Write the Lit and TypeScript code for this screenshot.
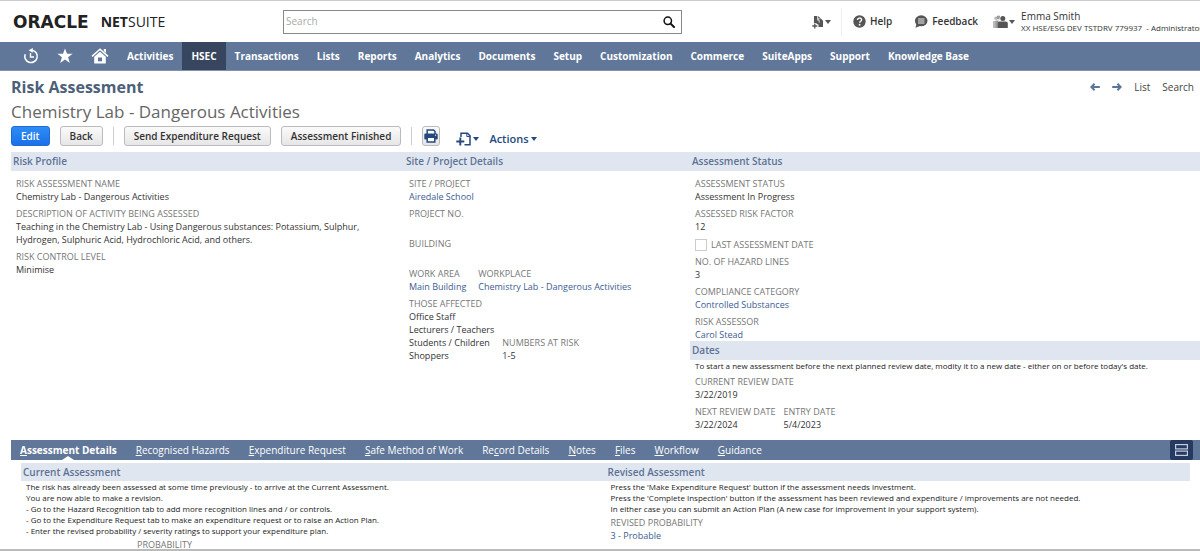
import { LitElement, html, css, svg, nothing, TemplateResult } from "lit";
import { customElement, state } from "lit/decorators.js";
import { classMap } from "lit/directives/class-map.js";

const NAV = [
  "Activities", "HSEC", "Transactions", "Lists", "Reports", "Analytics", "Documents", "Setup",
  "Customization", "Commerce", "SuiteApps", "Support", "Knowledge Base",
];

/* Text before the access key, the access key, text after it. */
const TABS: [string, string, string][] = [
  ["", "A", "ssessment Details"],
  ["", "R", "ecognised Hazards"],
  ["", "E", "xpenditure Request"],
  ["", "S", "afe Method of Work"],
  ["Re", "c", "ord Details"],
  ["", "N", "otes"],
  ["", "F", "iles"],
  ["", "W", "orkflow"],
  ["", "G", "uidance"],
];

const caret = html`<svg class="caret" viewBox="0 0 6 4" width="6" height="4" aria-hidden="true"><path d="M0 0h6L3 4z" fill="currentColor" /></svg>`;

const icon = (w: number, h: number, body: TemplateResult | ReturnType<typeof svg>) =>
  html`<svg class="icon" viewBox="0 0 ${w} ${h}" width=${w} height=${h} aria-hidden="true">${body}</svg>`;

const icons = {
  search: icon(12, 12, svg`<circle cx="4.8" cy="4.8" r="3.7" fill="none" stroke="#111" stroke-width="1.5"/><path d="M7.6 7.6l3.4 3.4" stroke="#111" stroke-width="2" stroke-linecap="round"/>`),
  create: icon(12, 14, svg`<path d="M2 1h3.500v4.500H7V9H2z" fill="#555"/><path d="M6.200 3.500h2.600L11 5.700V12H5.500V8H7z" fill="#555"/><path d="M5.900 1v3.800h1.300v3" fill="none" stroke="#fff" stroke-width=".7"/><path d="M6.200 1L8.500 3.200H6.200z" fill="#555"/><path d="M3 8v6M0 11h6.500" stroke="#fff" stroke-width="3"/><path d="M2.800 8.500v5M.3 11h5" stroke="#555" stroke-width="1.300"/>`),
  help: icon(13, 13, svg`<circle cx="6.500" cy="6.500" r="6.200" fill="#555"/><path d="M4.500 5.100c0-2.700 4.100-2.600 4.100-.3 0 1.500-1.900 1.500-1.900 3" fill="none" stroke="#fff" stroke-width="1.400"/><circle cx="6.600" cy="9.800" r=".95" fill="#fff"/>`),
  feedback: icon(14, 13, svg`<ellipse cx="7.200" cy="5.800" rx="6.300" ry="5.500" fill="#555"/><path d="M2.500 8.500L1.500 12.800l5-2z" fill="#555"/><path d="M4 4h6.500M4 6h6.500M4 8h6.500" stroke="#fff" stroke-width=".9"/>`),
  roles: icon(15, 14, svg`<path d="M0 6h4v7H0z" fill="#bbb"/><circle cx="3" cy="3.300" r="1.800" fill="#bbb"/><circle cx="5.600" cy="2.600" r="2" fill="#999"/><path d="M2.500 5.500h3V13h-3z" fill="#999"/><circle cx="9.800" cy="3.500" r="3.200" fill="#fff"/><circle cx="9.800" cy="3.500" r="2.500" fill="#555"/><path d="M4.800 13V8.500c0-1.500 1-2 2-2h6c1.200 0 2 .7 2 2V13z" fill="#555"/>`),
  recent: icon(16, 16, svg`<path d="M2.200 6.200A6.200 6.200 0 1 0 9.500 2.300" fill="none" stroke="#fff" stroke-width="1.600"/><path d="M9.800 0v4.800L5.600 2.300z" fill="#fff"/><path d="M7.500 5v4h3.500" fill="none" stroke="#fff" stroke-width="1.400"/>`),
  star: icon(16, 16, svg`<path d="M8 .5l2 5.300h5.600l-4.500 3.500 1.700 5.700L8 11.600 3.200 15l1.700-5.700L.4 5.800H6z" fill="#fff"/>`),
  home: icon(18, 16, svg`<path d="M1 8.300L9 1.200l8 7.100" fill="none" stroke="#fff" stroke-width="1.600"/><path d="M12.800 1h2.200v4l-2.200-2z" fill="#fff"/><path d="M3.200 8.800L9 3.700l5.800 5.100V15.500H3.200z" fill="#fff"/><path d="M7 9.500h4v3.800H7z" fill="#607799"/>`),
  left: icon(10, 8, svg`<path d="M9.800 4H1.500M4.600.8L1.400 4l3.200 3.200" fill="none" stroke="#5d7599" stroke-width="2"/>`),
  right: icon(10, 8, svg`<path d="M.2 4h8.300M5.400.8L8.600 4 5.400 7.200" fill="none" stroke="#5d7599" stroke-width="2"/>`),
  print: icon(14, 14, svg`<path d="M3.200 5V1h6.300l1.500 1.500V5" fill="#fff" stroke="#24497f" stroke-width="1.500"/><rect x=".3" y="4.500" width="13.400" height="6" rx="1.200" fill="#24497f"/><path d="M3.200 8.300h7.600V13H3.200z" fill="#fff" stroke="#24497f" stroke-width="1.500"/><circle cx="11.600" cy="6.200" r=".6" fill="#fff"/>`),
  newRecord: icon(15, 14, svg`<path d="M5 5V1.200h6.500L14 3.800v9H8.500" fill="none" stroke="#24497f" stroke-width="1.500"/><path d="M10.800 1v3.500H14" fill="none" stroke="#24497f"/><path d="M4.300 5.500v8M.3 9.500h8" stroke="#24497f" stroke-width="1.900"/>`),
  layout: icon(13, 12, svg`<rect x=".6" y=".6" width="11.800" height="4.300" fill="none" stroke="#c3cde0" stroke-width="1.200"/><rect x=".6" y="7.100" width="11.800" height="4.300" fill="none" stroke="#c3cde0" stroke-width="1.200"/>`),
};

const field = (label: string, value: unknown = nothing) =>
  html`<div class="field"><dt>${label}</dt><dd>${value}</dd></div>`;

const link = (text: string) => html`<a href="#">${text}</a>`;

@customElement("app-root")
export class AppRoot extends LitElement {
  static styles = css`
    :host {
      display: flex;
      flex-direction: column;
      box-sizing: border-box;
      height: 100vh;
      overflow: hidden;
      border-top: 1px solid #ccc;
      border-bottom: 2px solid #bbb;
      background: #fff;
      color: #333;
      font-family: "Open Sans", sans-serif;
      font-size: 10px;
      line-height: 13px;
    }
    * { box-sizing: border-box; }
    a { color: #3c5c93; text-decoration: none; }
    button { font: inherit; color: inherit; background: none; border: 0; padding: 0; cursor: pointer; }
    h1, h2, h3, p, dl, dd { margin: 0; }
    .icon, .caret { display: block; flex: none; }

    .top {
      display: grid;
      grid-template-columns: 283px minmax(120px, 399px) minmax(0, 1fr);
      align-items: center;
      flex: none;
      height: 41px;
    }
    .logo { display: flex; align-items: center; gap: 12px; padding-left: 13px; color: #222; }
    .oracle { font: bold 17px/20px "DejaVu Sans", sans-serif; }
    .netsuite { font-size: 14px; line-height: 20px; }
    .search { display: flex; align-items: center; height: 24px; border: 1px solid #888; padding-right: 6px; }
    .search input { flex: 1; min-width: 0; border: 0; outline: 0; padding: 0 2px; font: inherit; background: none; }
    .search input::placeholder { color: #aaa; }
    .tools { display: flex; align-items: center; padding-left: 130px; white-space: nowrap; color: #333; overflow: hidden; }
    .tool { display: flex; align-items: center; gap: 4px; font-weight: 600; flex: none; }
    .tool .caret { color: #555; }
    .create { gap: 1px; padding-right: 10px; margin-right: 11px; border-right: 1px solid #eee; height: 28px; }
    .feedback { margin: 0 15px 0 22px; }
    .roles { gap: 1px; }
    .user { margin-left: 6px; line-height: 12px; flex: none; }
    .account { font-size: 8px; }

    .nav { display: flex; flex: none; height: 29px; padding-left: 14px; background: #607799; border-bottom: 1px solid #8390b0; }
    .nav a { display: flex; align-items: center; padding: 0 9px; color: #fff; font-weight: 700; white-space: nowrap; }
    .nav .current { background: #38455e; }

    .head { display: grid; grid-template-columns: 1fr auto; flex: none; padding: 5px 6px 6px 11px; }
    h1 { font-size: 16px; line-height: 22px; color: #4d5f79; }
    h2 { grid-column: 1 / -1; font-size: 17px; line-height: 28px; font-weight: 400; color: #666; }
    .pager { display: flex; align-items: center; gap: 12px; }
    .pager a { color: #444; }
    .actions { grid-column: 1 / -1; display: flex; align-items: center; gap: 10px; }
    .btn { height: 20px; padding: 0 9px; border: 1px solid #bbb; border-radius: 3px; background: linear-gradient(#fafafa, #e6e6e6); line-height: 18px; font-weight: 600; white-space: nowrap; }
    .primary { background: linear-gradient(#2f8df5, #1a70e8); border-color: #1c6cd4; color: #fff; }
    .rule { width: 1px; height: 18px; background: #ccc; }
    .square { width: 18px; padding: 0 1px; margin-right: 6px; }
    .menu { display: flex; align-items: center; gap: 2px; color: #24497f; font-size: 11px; font-weight: 600; padding-top: 5px; }

    .summary { display: grid; grid-template-columns: 393fr 286fr 510fr; flex: none; margin-left: 11px; padding-bottom: 9px; }
    h3 { height: 19px; padding-left: 2px; font-size: 10px; line-height: 19px; font-weight: 600; color: #5d7295; background: #e0e6ef; }
    .fields { display: flex; flex-direction: column; gap: 5px; padding: 7px 20px 0 5px; font-size: 9px; }
    .row { display: flex; align-items: flex-end; gap: 8px; }
    .wide { gap: 12px; }
    .field { min-height: 25px; }
    dt { line-height: 12px; color: #777; white-space: nowrap; }
    .check { display: flex; align-items: center; gap: 4px; height: 13px; line-height: 13px; color: #777; }
    .check input { appearance: none; width: 12px; height: 12px; margin: 0; border: 1px solid #ccc; background: #fff; }
    .status { padding-right: 0; }
    .dates { padding-top: 0; padding-right: 0; }
    .note { font-size: 8px; line-height: 11px; color: #222; }

    .tabs { display: flex; align-items: stretch; flex: none; height: 20px; margin-left: 11px; padding-left: 9px; gap: 19px; background: #607799; }
    .tabs button { position: relative; color: #fff; white-space: nowrap; }
    .tabs u { text-underline-offset: 1px; }
    .tabs .on { font-weight: 700; }
    .tabs .on::after { content: ""; position: absolute; left: 50%; bottom: 0; margin-left: -6px; border: 6px solid transparent; border-top: 0; border-bottom: 4px solid #fff; }
    .tabs .layout { display: grid; place-items: center; width: 23px; margin: 0 7px 0 auto; background: #263960; border-radius: 2px; }

    .detail { display: grid; grid-template-columns: 1fr 1fr; margin: 3px 10px 0 21px; }
    .detail h3 { height: 18px; line-height: 18px; }
    .detail .fields { padding-top: 0; gap: 3px; }
    .detail .indent { padding-left: 111px; }
  `;

  @state() private tab = 0;

  private renderTop() {
    return html`
      <header class="top">
        <div class="logo"><span class="oracle">ORACLE</span><span class="netsuite"><b>NET</b>SUITE</span></div>
        <form class="search" role="search" @submit=${(e: Event) => e.preventDefault()}>
          <input type="search" placeholder="Search" aria-label="Search" />
          <button aria-label="Run search">${icons.search}</button>
        </form>
        <div class="tools">
          <button class="tool create" aria-label="Create new">${icons.create}${caret}</button>
          <button class="tool">${icons.help}Help</button>
          <button class="tool feedback">${icons.feedback}Feedback</button>
          <button class="tool roles" aria-label="Change role">${icons.roles}${caret}</button>
          <div class="user">
            <div>Emma Smith</div>
            <div class="account">XX HSE/ESG DEV TSTDRV 779937 &nbsp;- Administrator</div>
          </div>
        </div>
      </header>`;
  }

  private renderNav() {
    return html`
      <nav class="nav">
        <a href="#" aria-label="Recent records">${icons.recent}</a>
        <a href="#" aria-label="Shortcuts">${icons.star}</a>
        <a href="#" aria-label="Home">${icons.home}</a>
        ${NAV.map((n) => html`<a href="#" class=${classMap({ current: n === "HSEC" })}>${n}</a>`)}
      </nav>`;
  }

  private renderHead() {
    return html`
      <div class="head">
        <h1>Risk Assessment</h1>
        <div class="pager">
          <a href="#" aria-label="Previous">${icons.left}</a>
          <a href="#" aria-label="Next">${icons.right}</a>
          <a href="#">List</a>
          <a href="#">Search</a>
        </div>
        <h2>Chemistry Lab - Dangerous Activities</h2>
        <div class="actions">
          <button class="btn primary">Edit</button>
          <button class="btn">Back</button>
          <span class="rule"></span>
          <button class="btn">Send Expenditure Request</button>
          <button class="btn">Assessment Finished</button>
          <span class="rule"></span>
          <button class="btn square" aria-label="Print">${icons.print}</button>
          <button class="menu" aria-label="New record">${icons.newRecord}${caret}</button>
          <button class="menu">Actions${caret}</button>
        </div>
      </div>`;
  }

  private renderSummary() {
    return html`
      <main class="summary">
        <section>
          <h3>Risk Profile</h3>
          <dl class="fields">
            ${field("RISK ASSESSMENT NAME", "Chemistry Lab - Dangerous Activities")}
            ${field("DESCRIPTION OF ACTIVITY BEING ASSESSED", "Teaching in the Chemistry Lab - Using Dangerous substances: Potassium, Sulphur, Hydrogen, Sulphuric Acid, Hydrochloric Acid, and others.")}
            ${field("RISK CONTROL LEVEL", "Minimise")}
          </dl>
        </section>
        <section>
          <h3>Site / Project Details</h3>
          <dl class="fields">
            ${field("SITE / PROJECT", link("Airedale School"))}
            ${field("PROJECT NO.")}
            ${field("BUILDING")}
            <div class="row wide">
              ${field("WORK AREA", link("Main Building"))}
              ${field("WORKPLACE", link("Chemistry Lab - Dangerous Activities"))}
            </div>
            <div class="row">
              ${field("THOSE AFFECTED", html`Office Staff<br />Lecturers / Teachers<br />Students / Children<br />Shoppers`)}
              ${field("NUMBERS AT RISK", "1-5")}
            </div>
          </dl>
        </section>
        <section>
          <h3>Assessment Status</h3>
          <dl class="fields status">
            ${field("ASSESSMENT STATUS", "Assessment In Progress")}
            ${field("ASSESSED RISK FACTOR", "12")}
            <label class="check"><input type="checkbox" />LAST ASSESSMENT DATE</label>
            ${field("NO. OF HAZARD LINES", "3")}
            ${field("COMPLIANCE CATEGORY", link("Controlled Substances"))}
            ${field("RISK ASSESSOR", link("Carol Stead"))}
          </dl>
          <h3>Dates</h3>
          <dl class="fields dates">
            <p class="note">To start a new assessment before the next planned review date, modity it to a new date - either on or before today's date.</p>
            ${field("CURRENT REVIEW DATE", "3/22/2019")}
            <div class="row">
              ${field("NEXT REVIEW DATE", "3/22/2024")}
              ${field("ENTRY DATE", "5/4/2023")}
            </div>
          </dl>
        </section>
      </main>`;
  }

  private renderTabs() {
    return html`
      <div class="tabs" role="tablist">
        ${TABS.map(([pre, key, post], i) => html`<button role="tab" aria-selected=${i === this.tab} class=${classMap({ on: i === this.tab })} @click=${() => (this.tab = i)}>${pre}<u>${key}</u>${post}</button>`)}
        <button class="layout" aria-label="Toggle layout">${icons.layout}</button>
      </div>
      <div class="detail">
        <section>
          <h3>Current Assessment</h3>
          <dl class="fields">
            <p class="note">
              The risk has already been assessed at some time previously - to arrive at the Current Assessment.<br />
              You are now able to make a revision.<br />
              - Go to the Hazard Recognition tab to add more recognition lines and / or controls.<br />
              - Go to the Expenditure Request tab to make an expenditure request or to raise an Action Plan.<br />
              - Enter the revised probability / severity ratings to support your expenditure plan.
            </p>
            <div class="indent">${field("PROBABILITY")}</div>
          </dl>
        </section>
        <section>
          <h3>Revised Assessment</h3>
          <dl class="fields">
            <p class="note">
              Press the 'Make Expenditure Request' button if the assessment needs investment.<br />
              Press the 'Complete Inspection' button if the assessment has been reviewed and expenditure / improvements are not needed.<br />
              In either case you can submit an Action Plan (A new case for improvement in your support system).
            </p>
            ${field("REVISED PROBABILITY", link("3 - Probable"))}
          </dl>
        </section>
      </div>`;
  }

  render() {
    return html`${this.renderTop()}${this.renderNav()}${this.renderHead()}${this.renderSummary()}${this.renderTabs()}`;
  }
}
